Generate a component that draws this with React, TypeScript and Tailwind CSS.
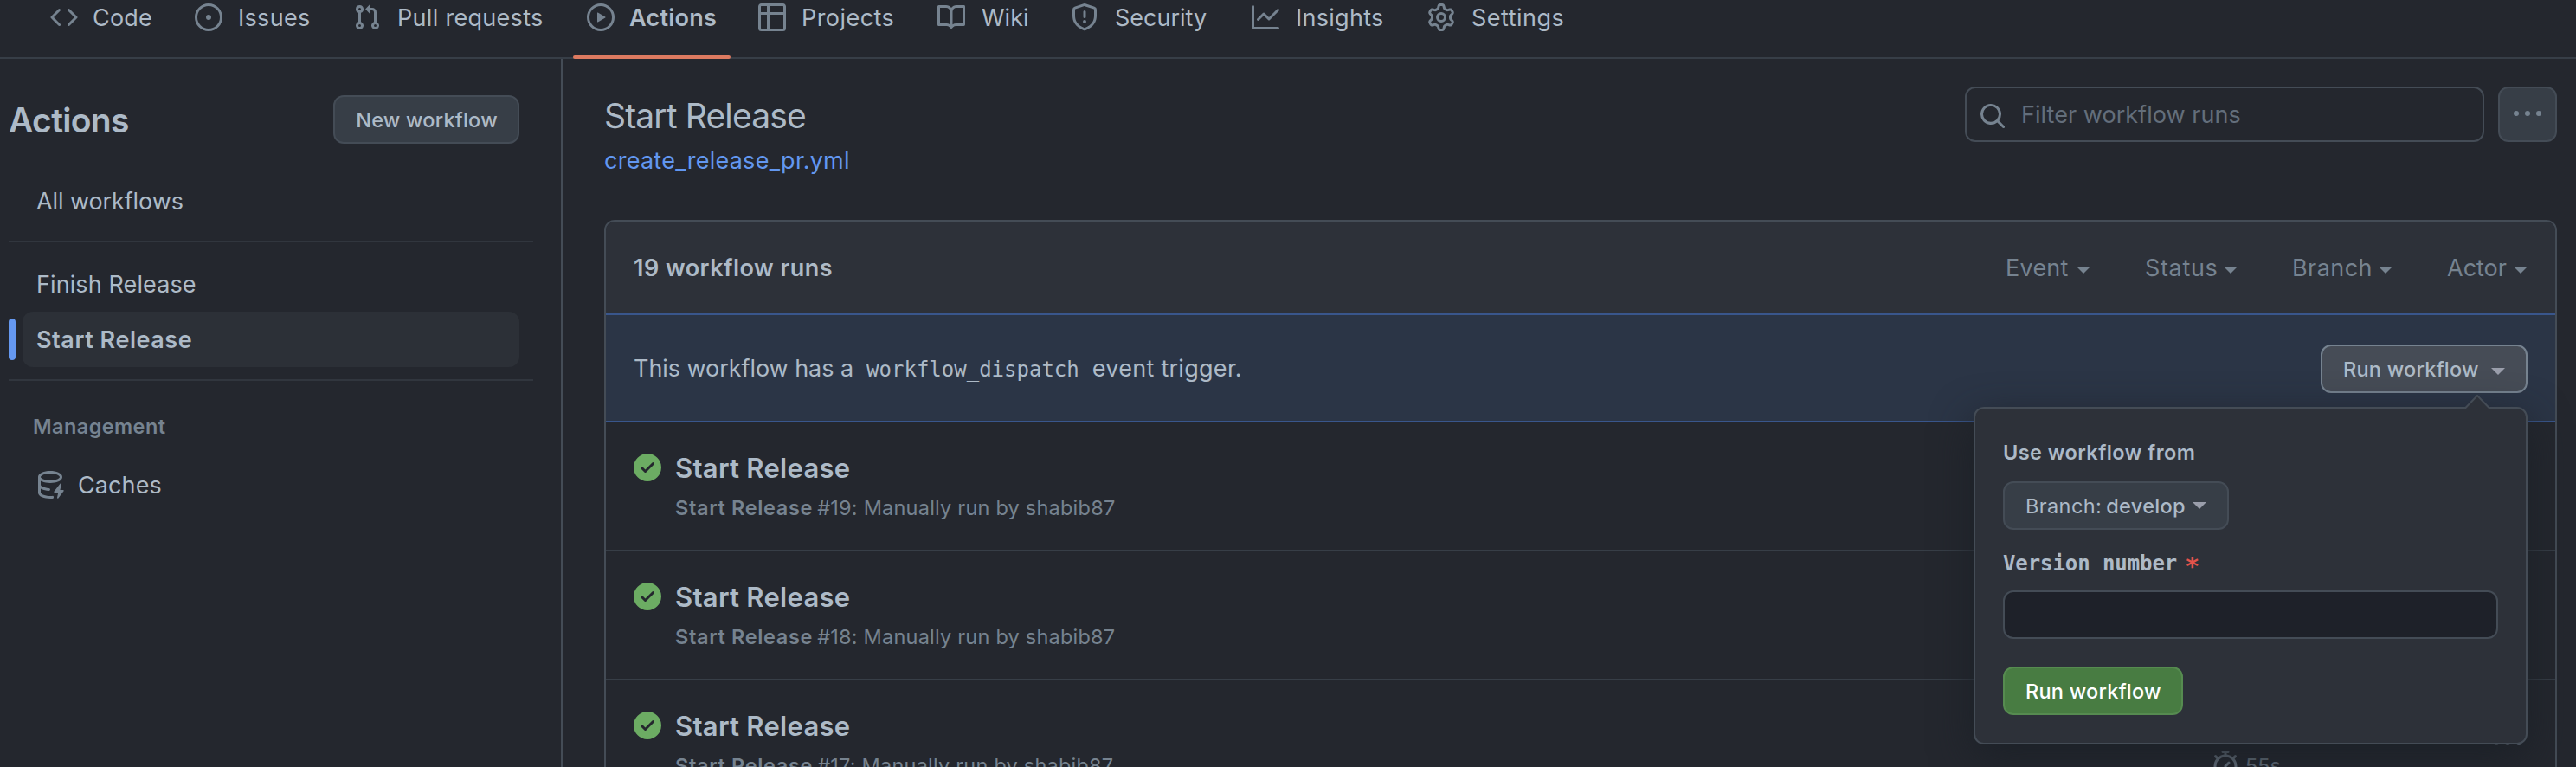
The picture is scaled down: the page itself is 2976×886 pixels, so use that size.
import type { ReactNode } from 'react';

const CIRCLE = 'M8 0a8 8 0 1 1 0 16A8 8 0 0 1 8 0ZM1.5 8a6.5 6.5 0 1 0 13 0 6.5 6.5 0 0 0-13 0Z';

const icons = {
  code: 'm11.28 3.22 4.25 4.25a.75.75 0 0 1 0 1.06l-4.25 4.25a.749.749 0 0 1-1.275-.326.749.749 0 0 1 .215-.734L13.94 8l-3.72-3.72a.749.749 0 0 1 .326-1.275.749.749 0 0 1 .734.215Zm-6.56 0a.751.751 0 0 1 1.042.018.751.751 0 0 1 .018 1.042L2.06 8l3.72 3.72a.749.749 0 0 1-.326 1.275.749.749 0 0 1-.734-.215L.47 8.53a.75.75 0 0 1 0-1.06Z',
  issue: 'M8 9.5a1.5 1.5 0 1 0 0-3 1.5 1.5 0 0 0 0 3Z' + CIRCLE,
  pull: 'M1.5 3.25a2.25 2.25 0 1 1 3 2.122v5.256a2.251 2.251 0 1 1-1.5 0V5.372A2.25 2.25 0 0 1 1.5 3.25Zm5.677-.177L9.573.677A.25.25 0 0 1 10 .854V2.5h1A2.5 2.5 0 0 1 13.5 5v5.628a2.251 2.251 0 1 1-1.5 0V5a1 1 0 0 0-1-1h-1v1.646a.25.25 0 0 1-.427.177L7.177 3.427a.25.25 0 0 1 0-.354ZM3.75 2.5a.75.75 0 1 0 0 1.5.75.75 0 0 0 0-1.5Zm0 9.5a.75.75 0 1 0 0 1.5.75.75 0 0 0 0-1.5Zm8.25.75a.75.75 0 1 0 1.5 0 .75.75 0 0 0-1.5 0Z',
  play: CIRCLE + 'm4.879-2.773 4.264 2.559a.25.25 0 0 1 0 .428l-4.264 2.559A.25.25 0 0 1 6 10.559V5.442a.25.25 0 0 1 .379-.215Z',
  table: 'M0 1.75C0 .784.784 0 1.75 0h12.5C15.216 0 16 .784 16 1.75v12.5A1.75 1.75 0 0 1 14.25 16H1.75A1.75 1.75 0 0 1 0 14.25ZM6.5 6.5v8h7.75a.25.25 0 0 0 .25-.25V6.5Zm8-1.5V1.75a.25.25 0 0 0-.25-.25H6.5V5Zm-13 1.5v7.75c0 .138.112.25.25.25H5v-8ZM5 5V1.5H1.75a.25.25 0 0 0-.25.25V5Z',
  book: 'M0 1.75A.75.75 0 0 1 .75 1h4.253c1.227 0 2.317.59 3 1.501A3.743 3.743 0 0 1 11.006 1h4.245a.75.75 0 0 1 .75.75v10.5a.75.75 0 0 1-.75.75h-4.507a2.25 2.25 0 0 0-1.591.659l-.622.621a.75.75 0 0 1-1.06 0l-.622-.621A2.25 2.25 0 0 0 5.258 13H.75a.75.75 0 0 1-.75-.75Zm7.251 10.324.004-5.073-.002-2.253A2.25 2.25 0 0 0 5.003 2.5H1.5v9h3.757a3.75 3.75 0 0 1 1.994.574ZM8.755 4.75l-.004 7.322a3.752 3.752 0 0 1 1.992-.572H14.5v-9h-3.495a2.25 2.25 0 0 0-2.25 2.25Z',
  shield: 'M7.467.133a1.748 1.748 0 0 1 1.066 0l5.25 1.68A1.75 1.75 0 0 1 15 3.48V7c0 1.566-.32 3.182-1.303 4.682-.983 1.498-2.585 2.813-5.032 3.855a1.697 1.697 0 0 1-1.33 0c-2.447-1.042-4.049-2.357-5.032-3.855C1.32 10.182 1 8.566 1 7V3.48a1.75 1.75 0 0 1 1.217-1.667Zm.61 1.429a.25.25 0 0 0-.153 0l-5.25 1.68a.25.25 0 0 0-.174.238V7c0 1.358.275 2.666 1.057 3.86.784 1.194 2.121 2.34 4.366 3.297a.196.196 0 0 0 .154 0c2.245-.956 3.582-2.104 4.366-3.298C13.225 9.666 13.5 8.36 13.5 7V3.48a.251.251 0 0 0-.174-.237l-5.25-1.68ZM8.75 4.75v3a.75.75 0 0 1-1.5 0v-3a.75.75 0 0 1 1.5 0ZM9 10.5a1 1 0 1 1-2 0 1 1 0 0 1 2 0Z',
  graph: 'M1.5 1.75V13.5h13.75a.75.75 0 0 1 0 1.5H.75a.75.75 0 0 1-.75-.75V1.75a.75.75 0 0 1 1.5 0Zm14.28 2.53-5.25 5.25a.75.75 0 0 1-1.06 0L7 7.06 4.28 9.78a.751.751 0 0 1-1.042-.018.751.751 0 0 1-.018-1.042l3.25-3.25a.75.75 0 0 1 1.06 0L10 7.94l4.72-4.72a.751.751 0 0 1 1.042.018.751.751 0 0 1 .018 1.042Z',
  gear: 'M8 0a8.2 8.2 0 0 1 .701.031C9.444.095 9.99.645 10.16 1.29l.288 1.107c.018.066.079.158.212.224.231.114.454.243.668.386.123.082.233.09.299.071l1.103-.303c.644-.176 1.392.021 1.82.63.27.385.506.792.704 1.218.315.675.111 1.422-.364 1.891l-.814.806c-.049.048-.098.147-.088.294.016.257.016.515 0 .772-.01.147.038.246.088.294l.814.806c.475.469.679 1.216.364 1.891a7.977 7.977 0 0 1-.704 1.217c-.428.61-1.176.807-1.82.63l-1.102-.302c-.067-.019-.177-.011-.3.071a5.909 5.909 0 0 1-.668.386c-.133.066-.194.158-.211.224l-.29 1.106c-.168.646-.715 1.196-1.458 1.26a8.006 8.006 0 0 1-1.402 0c-.743-.064-1.289-.614-1.458-1.26l-.289-1.106c-.018-.066-.079-.158-.212-.224a5.738 5.738 0 0 1-.668-.386c-.123-.082-.233-.09-.299-.071l-1.103.303c-.644.176-1.392-.021-1.82-.63a8.12 8.12 0 0 1-.704-1.218c-.315-.675-.111-1.422.363-1.891l.815-.806c.05-.048.098-.147.088-.294a6.214 6.214 0 0 1 0-.772c.01-.147-.038-.246-.088-.294l-.815-.806C.635 6.045.431 5.298.746 4.623a7.92 7.92 0 0 1 .704-1.217c.428-.61 1.176-.807 1.82-.63l1.102.302c.067.019.177.011.3-.071.214-.143.437-.272.668-.386.133-.066.194-.158.211-.224l.29-1.106C6.009.645 6.556.095 7.299.03 7.53.01 7.764 0 8 0Zm-.571 1.525c-.036.003-.108.036-.137.146l-.289 1.105c-.147.561-.549.967-.998 1.189-.173.086-.34.183-.5.29-.417.278-.97.423-1.529.27l-1.103-.303c-.109-.03-.175.016-.195.045-.22.312-.412.644-.573.99-.014.031-.021.11.059.19l.815.806c.411.406.562.957.53 1.456a4.709 4.709 0 0 0 0 .582c.032.499-.119 1.05-.53 1.456l-.815.806c-.081.08-.073.159-.059.19.162.346.353.677.573.989.02.03.085.076.195.046l1.102-.303c.56-.153 1.113-.008 1.53.27.161.107.328.204.501.29.447.222.85.629.997 1.189l.289 1.105c.029.109.101.143.137.146a6.6 6.6 0 0 0 1.142 0c.036-.003.108-.036.137-.146l.289-1.105c.147-.561.549-.967.998-1.189.173-.086.34-.183.5-.29.417-.278.97-.423 1.529-.27l1.103.303c.109.029.175-.016.195-.045.22-.313.411-.644.573-.99.014-.031.021-.11-.059-.19l-.815-.806c-.411-.406-.562-.957-.53-1.456a4.709 4.709 0 0 0 0-.582c-.032-.499.119-1.05.53-1.456l.815-.806c.081-.08.073-.159.059-.19a6.464 6.464 0 0 0-.573-.989c-.02-.03-.085-.076-.195-.046l-1.102.303c-.56.153-1.113.008-1.53-.27a4.44 4.44 0 0 0-.501-.29c-.447-.222-.85-.629-.997-1.189l-.289-1.105c-.029-.11-.101-.143-.137-.146a6.6 6.6 0 0 0-1.142 0ZM11 8a3 3 0 1 1-6 0 3 3 0 0 1 6 0ZM9.5 8a1.5 1.5 0 1 0-3.001.001A1.5 1.5 0 0 0 9.5 8Z',
  search: 'M10.68 11.74a6 6 0 0 1-7.922-8.982 6 6 0 0 1 8.982 7.922l3.04 3.04a.749.749 0 0 1-.326 1.275.749.749 0 0 1-.734-.215ZM11.5 7a4.499 4.499 0 1 0-8.997 0A4.499 4.499 0 0 0 11.5 7Z',
  check: 'M8 16A8 8 0 1 1 8 0a8 8 0 0 1 0 16Zm3.78-9.72a.751.751 0 0 0-.018-1.042.751.751 0 0 0-1.042-.018L6.75 9.19 5.28 7.72a.751.751 0 0 0-1.042.018.751.751 0 0 0-.018 1.042l2 2a.75.75 0 0 0 1.06 0Z',
  kebab: 'M8 9a1.5 1.5 0 1 0 0-3 1.5 1.5 0 0 0 0 3ZM1.5 9a1.5 1.5 0 1 0 0-3 1.5 1.5 0 0 0 0 3Zm13 0a1.5 1.5 0 1 0 0-3 1.5 1.5 0 0 0 0 3Z',
  cache: 'M2.5 5.724V8c0 .248.238.7 1.169 1.159.874.43 2.144.745 3.62.822a.75.75 0 1 1-.078 1.498c-1.622-.085-3.102-.432-4.204-.975a5.565 5.565 0 0 1-.507-.28V12.5c0 .133.058.318.282.551.227.237.591.483 1.101.707 1.015.447 2.47.742 4.117.742.406 0 .802-.018 1.183-.052a.751.751 0 1 1 .134 1.494C8.89 15.98 8.45 16 8 16c-1.805 0-3.475-.32-4.721-.869-.623-.274-1.173-.619-1.579-1.041-.408-.425-.7-.964-.7-1.59v-9c0-.626.292-1.165.7-1.591.406-.42.956-.766 1.579-1.04C4.525.32 6.195 0 8 0c1.806 0 3.476.32 4.721.869.623.274 1.173.619 1.579 1.041.408.425.7.964.7 1.59 0 .626-.292 1.165-.7 1.591-.406.42-.956.766-1.578 1.04C11.475 6.68 9.805 7 8 7c-1.805 0-3.475-.32-4.721-.869a6.15 6.15 0 0 1-.779-.407Zm0-2.224c0 .133.058.318.282.551.227.237.591.483 1.101.707C4.898 5.205 6.353 5.5 8 5.5c1.646 0 3.101-.295 4.118-.742.508-.224.873-.471 1.1-.708.224-.232.282-.417.282-.55 0-.133-.058-.318-.282-.551-.227-.237-.591-.483-1.101-.707C11.102 1.795 9.647 1.5 8 1.5c-1.646 0-3.101.295-4.118.742-.508.224-.873.471-1.1.708-.224.232-.282.417-.282.55Zm11.99 4.082a.375.375 0 0 0-.66-.313l-3.625 4.625a.375.375 0 0 0 .295.606h2.127l-.619 2.922a.375.375 0 0 0 .666.304l3.125-4.125A.375.375 0 0 0 15.5 11h-1.778l.769-3.418Z',
};

function Icon({ name, className = '' }: { name: keyof typeof icons; className?: string }) {
  return (
    <svg viewBox="0 0 16 16" className={`size-8 shrink-0 fill-current ${className}`} aria-hidden="true">
      <path d={icons[name]} />
    </svg>
  );
}

function Stopwatch() {
  return (
    <svg viewBox="0 0 16 16" className="size-8 shrink-0 fill-none stroke-current" strokeWidth="1.5" strokeLinecap="round" aria-hidden="true">
      <circle cx="8" cy="9" r="6" />
      <path d="M6.5.75h3M8 1v2M2.3 3.3l1 1M13.7 3.3l-1 1M8 9l2-2" />
    </svg>
  );
}

function Caret({ className = '' }: { className?: string }) {
  return <span className={`h-0 w-0 shrink-0 border-x-8 border-t-8 border-x-transparent border-t-current ${className}`} />;
}

const tabs: { icon: keyof typeof icons; label: string; box: string; text: string; active?: boolean }[] = [
  { icon: 'code', label: 'Code', box: 'w-[151px] gap-[17px]', text: 'tracking-[0.19px]' },
  { icon: 'issue', label: 'Issues', box: 'w-[167px] gap-[18px]', text: 'tracking-[0.31px]' },
  { icon: 'pull', label: 'Pull requests', box: 'w-[254px] gap-[19px]', text: 'tracking-[0.3px]' },
  { icon: 'play', label: 'Actions', box: 'w-[182px] gap-[17px]', text: 'font-semibold tracking-[0.25px]', active: true },
  { icon: 'table', label: 'Projects', box: 'w-[191px] gap-[18px]', text: 'tracking-[0.45px]' },
  { icon: 'book', label: 'Wiki', box: 'w-[138px] gap-[19px]', text: '' },
  { icon: 'shield', label: 'Security', box: 'w-[193px] gap-[19px]', text: '' },
  { icon: 'graph', label: 'Insights', box: 'w-[187px] gap-[19px]', text: 'tracking-[0.27px]' },
  { icon: 'gear', label: 'Settings', box: 'w-[190px] gap-[19px]', text: 'tracking-[0.5px]' },
];

function RepoNav() {
  return (
    <nav className="flex h-[68px] shrink-0 gap-4 border-b-2 border-[#373e47] pl-[42px]">
      {tabs.map((t) => (
        <a key={t.label} className={`relative flex h-10 shrink-0 items-center pl-4 ${t.box}`}>
          <Icon name={t.icon} className="text-[#768390]" />
          <span className={`mt-0.5 whitespace-nowrap ${t.text}`}>{t.label}</span>
          {t.active && <span className="absolute top-16 left-0 h-1 w-full rounded-[2px] bg-[#dd7a60]" />}
        </a>
      ))}
    </nav>
  );
}

function Sidebar() {
  return (
    <aside className="w-[650px] shrink-0 border-r-2 border-[#444c56]">
      <div className="mt-[42px] flex h-14 items-center justify-between pr-12 pl-[10px]">
        <h2 className="mt-0.5 text-[39px] leading-[54px] font-semibold tracking-[-0.68px]">Actions</h2>
        <button className="h-14 w-[215px] rounded-xl border-2 border-[#444c56] bg-[#373e47] pt-0.5 pl-[1px] text-[23.5px] font-medium tracking-[0.23px]">
          New workflow
        </button>
      </div>
      <div className="mt-[34px] flex h-16 items-center pt-0.5 pl-[42px] tracking-[-0.1px]">All workflows</div>
      <div className="mt-[14px] mr-8 ml-[10px] h-0.5 bg-[#31363e]" />
      <div className="mt-4 flex h-16 items-center pt-0.5 pl-[42px] tracking-[0.1px]">Finish Release</div>
      <div className="flex h-16 items-center gap-2 pr-12 pl-[10px]">
        <span className="h-12 w-2 rounded-full bg-[#6598f0]" />
        <div className="flex h-16 flex-1 items-center rounded-xl bg-[#2c3037] pt-0.5 pl-4 font-semibold tracking-[0.55px]">Start Release</div>
      </div>
      <div className="mt-[14px] mr-8 ml-[10px] h-0.5 bg-[#31363e]" />
      <div className="mt-5 flex h-16 items-center pt-0.5 pl-[38px] text-[23.5px] font-semibold tracking-[0.4px] text-[#768390]">Management</div>
      <div className="mt-1 flex h-16 items-center gap-4 pl-[42px] tracking-[0.1px]">
        <Icon name="cache" className="text-[#768390]" />
        <span className="mt-0.5">Caches</span>
      </div>
    </aside>
  );
}

function Filter({ children, className }: { children: ReactNode; className: string }) {
  return (
    <span className={`flex items-center justify-between ${className}`}>
      <span className="mt-0.5">{children}</span>
      <Caret className="mt-1.5" />
    </span>
  );
}

function DispatchPopover() {
  return (
    <div className="absolute top-[70px] -right-[2px] z-10 h-[390px] w-[640px] rounded-xl border-2 border-[#444c56] bg-[#2d3139] px-8 pt-8 text-left text-[23.5px] shadow-[0_16px_48px_#1c2128]">
      <svg viewBox="0 0 30 17" className="absolute -top-4 right-[41px] h-[17px] w-[30px]" aria-hidden="true">
        <path d="M0 17 15 1 30 17Z" fill="#2d3139" />
        <path d="M0.5 16 15 1 29.5 16" fill="none" stroke="#444c56" strokeWidth="2" />
      </svg>
      <div className="h-9 pt-px leading-9 font-semibold tracking-[0.42px]">Use workflow from</div>
      <button className="mt-4 flex h-14 w-[261px] items-center rounded-xl border-2 border-[#444c56] bg-[#373e47] pl-6">
        <span className="mt-0.5 font-normal tracking-[0.4px]">Branch:</span>
        <span className="mt-0.5 ml-[5px] font-medium tracking-[0.34px]">develop</span>
        <Caret className="ml-2 text-[#9a9eab]" />
      </button>
      <div className="mt-5 flex h-[38px] font-['DejaVu_Sans_Mono',monospace] text-2xl leading-[38px] font-bold tracking-[-0.08px]">
        Version number<span className="mt-1 ml-[9px] text-[28px] text-[#e5534b]">*</span>
      </div>
      <div className="mt-3 h-14 rounded-xl border-2 border-[#444c56] bg-[#1e2129]" />
      <button className="mt-8 flex h-14 w-[208px] items-center rounded-xl border-2 border-[#568b50] bg-[#487c42] pt-0.5 pl-6 font-medium tracking-[0.25px] text-white">
        Run workflow
      </button>
    </div>
  );
}

function RunRow({ number, duration }: { number: number; duration?: string }) {
  return (
    <li className="flex h-[149px] shrink-0 border-b-2 border-[#373e47] pr-[39px] pl-8">
      <Icon name="check" className="mt-9 text-[#6cac63]" />
      <div className="mt-9 ml-4 flex-1">
        <div className="h-[34px] text-[31px] leading-[34px] font-semibold tracking-[0.28px]">Start Release</div>
        <div className="mt-[11px] flex h-9 text-[23.5px] leading-9 text-[#768390]">
          <span className="font-semibold tracking-[0.65px]">Start Release</span>
          <span className="ml-[5px] tracking-[0.22px]">#{number}: Manually run by shabib87</span>
        </div>
      </div>
      {duration && (
        <div className="flex text-[#768390]">
          <div className="mt-[81px] flex w-[326px] gap-[7px] text-[23.5px] leading-9">
            <Stopwatch />
            {duration}
          </div>
          <Icon name="kebab" className="mt-[57px]" />
        </div>
      )}
    </li>
  );
}

export default function App() {
  return (
    <div className="flex h-[886px] w-full flex-col overflow-hidden bg-[#24272e] font-['Inter',sans-serif] text-[27px] leading-[42px] whitespace-nowrap text-[#adbac7]">
      <RepoNav />
      <div className="flex min-h-0 flex-1">
        <Sidebar />
        <main className="flex-1 pr-[22px] pl-12">
          <header className="flex h-[186px] items-start justify-between">
            <div className="mt-[42px]">
              <h1 className="h-12 text-[39px] leading-[48px] font-normal tracking-[-0.85px]">Start Release</h1>
              <a className="mt-[7px] block tracking-[0.26px] text-[#6297f0]">create_release_pr.yml</a>
            </div>
            <div className="mt-8 flex gap-4">
              <div className="flex h-16 w-[600px] items-center gap-[17px] rounded-xl border-2 border-[#444c56] pl-[14px] tracking-[0.04px] text-[#636e7b]">
                <Icon name="search" className="mt-1 text-[#768390]" />
                <span className="mt-0.5">Filter workflow runs</span>
              </div>
              <button className="flex h-16 w-[68px] items-center justify-center rounded-xl border-2 border-[#444c56] bg-[#373e47] text-[#768390]">
                <Icon name="kebab" />
              </button>
            </div>
          </header>

          <section className="rounded-t-xl border-2 border-[#444c56]">
            <div className="flex h-[106px] items-center justify-between rounded-t-[10px] bg-[#2d3139] px-8">
              <span className="mt-0.5 font-semibold tracking-[0.48px]">19 workflow runs</span>
              <div className="flex gap-[63px] text-[#768390]">
                <Filter className="w-[98px] tracking-[0.25px]">Event</Filter>
                <Filter className="w-[107px] tracking-[0.65px]">Status</Filter>
                <Filter className="w-[116px] tracking-[0.45px]">Branch</Filter>
                <Filter className="w-[93px]">Actor</Filter>
              </div>
            </div>
            <div className="flex h-[126px] items-center justify-between border-y-2 border-[#39568c] bg-[#2b3546] px-8">
              <div className="mt-0.5 flex items-baseline">
                <span className="tracking-[-0.05px]">This workflow has a</span>
                <code className="mx-[15px] font-['DejaVu_Sans_Mono',monospace] text-2xl">workflow_dispatch</code>
                <span className="tracking-[0.28px]">event trigger.</span>
              </div>
              <div className="relative mt-0.5 flex h-14 w-[239px] items-center rounded-xl border-2 border-[#768390] bg-[#464c56] pl-6 text-[23.5px] font-medium tracking-[0.25px]">
                <span className="mt-0.5">Run workflow</span>
                <Caret className="mt-1.5 ml-[14px] text-[#9a9eab]" />
                <DispatchPopover />
              </div>
            </div>
            <ul>
              <RunRow number={19} />
              <RunRow number={18} />
              <RunRow number={17} duration="55s" />
            </ul>
          </section>
        </main>
      </div>
    </div>
  );
}
